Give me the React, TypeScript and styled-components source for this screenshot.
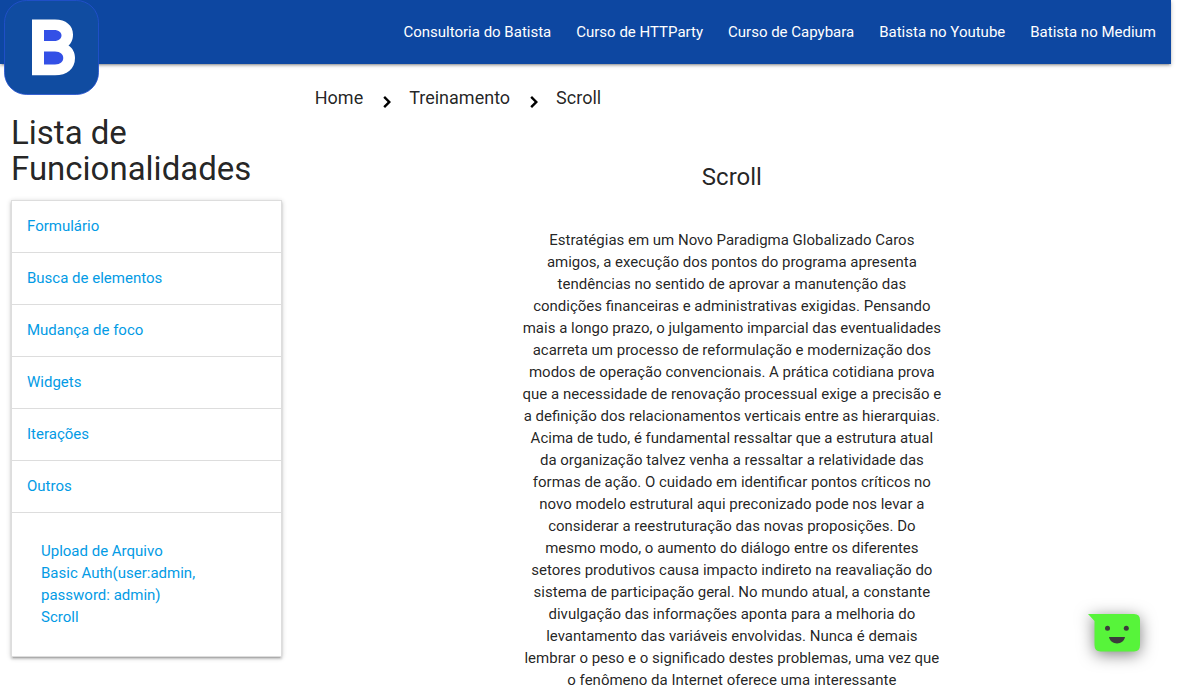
import React from "react";
import styled, { createGlobalStyle } from "styled-components";

const GlobalStyle = createGlobalStyle`
  *, *::before, *::after { box-sizing: border-box; }
  body {
    margin: 0;
    background: #fff;
    color: rgba(0, 0, 0, 0.87);
    font-family: Roboto, "Liberation Sans", sans-serif;
    font-size: 15px;
    line-height: 22px;
  }
  a { color: #039be5; text-decoration: none; }
`;

const raised =
  "0 2px 2px 0 rgba(0,0,0,0.14), 0 3px 1px -2px rgba(0,0,0,0.12), 0 1px 5px 0 rgba(0,0,0,0.2)";

const Page = styled.div`
  height: 100vh;
  overflow: hidden;
  padding-right: 17px;
`;

const TopBar = styled.header`
  position: relative;
  display: flex;
  justify-content: space-between;
  height: 64px;
  background: #0d47a1;
  box-shadow: ${raised};
`;

const LogoLink = styled.a`
  display: block;
  padding-left: 4px;
  svg { display: block; }
`;

const TopLinks = styled.nav`
  display: flex;
  align-items: center;
  gap: 25px;
  padding-right: 15px;
  a {
    line-height: 64px;
    color: #fff;
    white-space: nowrap;
  }
`;

const Columns = styled.div`
  display: grid;
  grid-template-columns: 1fr 3fr;
`;

const Sidebar = styled.aside`
  padding: 51px 11px 0;
`;

const SidebarTitle = styled.h1`
  margin: 0 0 13px;
  font-size: 33px;
  line-height: 36px;
  font-weight: 400;
`;

const Menu = styled.ul`
  margin: 0;
  padding: 0;
  list-style: none;
  border: 1px solid #ddd;
  border-bottom: 0;
  box-shadow: ${raised};
`;

const MenuHeader = styled.a`
  display: block;
  padding: 14px 15px 15px;
  border-bottom: 1px solid #ddd;
`;

const SubMenu = styled.div`
  display: flex;
  flex-direction: column;
  padding: 27px 72px 28px 29px;
  border-bottom: 1px solid #ddd;
`;

const Main = styled.main`
  padding: 22px 11px 0;
`;

const Crumbs = styled.nav`
  display: flex;
  align-items: flex-start;
  padding-left: 11px;
  font-size: 18px;
  line-height: 24px;
  a { color: inherit; }
  svg { margin: 4px 10px 0 12px; }
`;

const Article = styled.article`
  display: flex;
  flex-direction: column;
  align-items: center;
  margin: 0 -11px;
  text-align: center;
`;

const ArticleTitle = styled.h2`
  margin: 50px 0 39px;
  font-size: 24px;
  line-height: 26px;
  font-weight: 400;
`;

const ArticleText = styled.p`
  width: 50%;
  margin: 0;
  padding: 0 10px;
`;

const ChatButton = styled.button`
  position: fixed;
  right: 48px;
  bottom: 33px;
  padding: 0;
  border: 0;
  background: none;
  cursor: pointer;
  svg {
    display: block;
    overflow: visible;
    filter: drop-shadow(0 3px 8px rgba(0, 0, 0, 0.5));
  }
`;

const Logo = () => (
  <svg width="95" height="95" viewBox="0 0 95 95" role="img" aria-label="Batista">
    <rect x="0.5" y="0.5" width="94" height="94" rx="22" fill="#104ca1" stroke="#2450d0" strokeWidth="0.8" />
    <path
      d="M28 19.5H51C62 19.5 69 25.500 69 34.500C69 40 67 43.500 64.500 45.500C68.500 48 71 52.500 71 58C71 69 63 75.300 51 75.300H28Z"
      fill="#fff"
    />
    <path d="M40 30H50C60 30 60 41 50 41H40Z" fill="#3350e6" />
    <path d="M40 51.500H51C62 51.500 62 64.500 51 64.500H40Z" fill="#3350e6" />
  </svg>
);

const Chevron = () => (
  <svg width="24" height="24" viewBox="0 0 24 24" aria-hidden="true">
    <path d="M10 6 8.300 7.700 12.600 12 8.300 16.300 10 18l6-6z" fill="#000" />
  </svg>
);

const ChatFace = () => (
  <svg width="52" height="38" viewBox="0 0 52 38" aria-hidden="true">
    <path d="M0 0H46Q52 0 52 6V31Q52 37.500 46 37.500H12.500Q6.500 37.500 6.500 31V7Z" fill="#57f43a" />
    <circle cx="19.500" cy="14.300" r="2.500" fill="#3b3b3b" />
    <circle cx="38.300" cy="14.300" r="2.500" fill="#3b3b3b" />
    <path d="M21 23H37C35.500 31.500 22.500 31.500 21 23Z" fill="#3b3b3b" />
  </svg>
);

const topLinks = [
  "Consultoria do Batista",
  "Curso de HTTParty",
  "Curso de Capybara",
  "Batista no Youtube",
  "Batista no Medium",
];

const features = ["Formulário", "Busca de elementos", "Mudança de foco", "Widgets", "Iterações", "Outros"];

const others = ["Upload de Arquivo", "Basic Auth(user:admin, password: admin)", "Scroll"];

export default function App() {
  return (
    <>
      <GlobalStyle />
      <Page>
        <TopBar>
          <LogoLink href="#"><Logo /></LogoLink>
          <TopLinks>
            {topLinks.map((label) => <a href="#" key={label}>{label}</a>)}
          </TopLinks>
        </TopBar>
        <Columns>
          <Sidebar>
            <SidebarTitle>Lista de Funcionalidades</SidebarTitle>
            <Menu>
              {features.map((label) => (
                <li key={label}><MenuHeader href="#">{label}</MenuHeader></li>
              ))}
              <li>
                <SubMenu>
                  {others.map((label) => <a href="#" key={label}>{label}</a>)}
                </SubMenu>
              </li>
            </Menu>
          </Sidebar>
          <Main>
            <Crumbs aria-label="Navegação">
              <a href="#">Home</a>
              <Chevron />
              <a href="#">Treinamento</a>
              <Chevron />
              <a href="#">Scroll</a>
            </Crumbs>
            <Article>
              <ArticleTitle>Scroll</ArticleTitle>
              <ArticleText>
                Estratégias em um Novo Paradigma Globalizado Caros amigos, a execução dos pontos do
                programa apresenta tendências no sentido de aprovar a manutenção das condições
                financeiras e administrativas exigidas. Pensando mais a longo prazo, o julgamento
                imparcial das eventualidades acarreta um processo de reformulação e modernização dos
                modos de operação convencionais. A prática cotidiana prova que a necessidade de
                renovação processual exige a precisão e a definição dos relacionamentos verticais
                entre as hierarquias. Acima de tudo, é fundamental ressaltar que a estrutura atual da
                organização talvez venha a ressaltar a relatividade das formas de ação. O cuidado em
                identificar pontos críticos no novo modelo estrutural aqui preconizado pode nos levar
                a considerar a reestruturação das novas proposições. Do mesmo modo, o aumento do
                diálogo entre os diferentes setores produtivos causa impacto indireto na reavaliação
                do sistema de participação geral. No mundo atual, a constante divulgação das
                informações aponta para a melhoria do levantamento das variáveis envolvidas. Nunca é
                demais lembrar o peso e o significado destes problemas, uma vez que o fenômeno da
                Internet oferece uma interessante
              </ArticleText>
            </Article>
          </Main>
        </Columns>
        <ChatButton type="button" aria-label="Abrir chat"><ChatFace /></ChatButton>
      </Page>
    </>
  );
}
